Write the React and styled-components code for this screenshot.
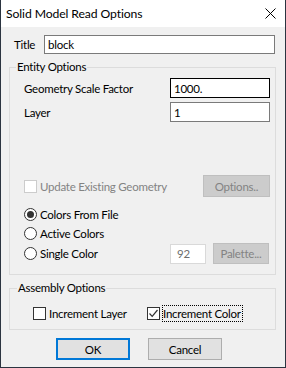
import React from 'react';
import styled, { createGlobalStyle } from 'styled-components';

const FONT = 'Lato, "Noto Sans", Arial, sans-serif';

const GlobalStyle = createGlobalStyle`
  html, body {
    margin: 0;
    padding: 0;
    background: #ffffff;
  }
  body {
    font-family: ${FONT};
    font-size: 11.5px;
    letter-spacing: -0.25px;
    color: #000000;
  }
`;

const Window = styled.div`
  box-sizing: border-box;
  width: 286px;
  height: 368px;
  border: 1px solid #2b3440;
  border-top: none;
  display: flex;
  flex-direction: column;
  background: #f0f0f0;
`;

const TitleBar = styled.div`
  height: 27px;
  flex: none;
  background: #ffffff;
  display: flex;
  align-items: center;
  padding: 0 9px 0 5px;
  font-size: 12.2px;
  letter-spacing: -0.1px;
`;

const TitleText = styled.div`
  flex: 1;
`;

const Body = styled.div`
  flex: 1;
  display: flex;
  flex-direction: column;
  padding: 8px 9px 0 8px;
`;

const TitleRow = styled.div`
  display: flex;
  align-items: center;
  height: 19px;
  padding: 0 1px 0 5px;
`;

const Label = styled.span`
  color: ${(p) => (p.disabled ? '#838383' : '#000000')};
  white-space: nowrap;
`;

const TextInput = styled.div`
  box-sizing: border-box;
  width: ${(p) => p.w}px;
  height: ${(p) => p.h || 20}px;
  margin-left: ${(p) => (p.push ? 'auto' : '0')};
  background: #ffffff;
  border: 1px solid ${(p) => (p.focused ? '#000000' : p.disabled ? '#d9d9d9' : '#7a7a7a')};
  color: ${(p) => (p.disabled ? '#6d6d6d' : '#000000')};
  display: flex;
  align-items: center;
  padding-left: ${(p) => (p.disabled ? 6 : 3)}px;
`;

const Group = styled.fieldset`
  margin: ${(p) => p.top || 0}px 0 0 0;
  padding: 0;
  min-width: 0;
  border: 1px solid #dcdcdc;
`;

const Legend = styled.legend`
  margin-left: ${(p) => p.offset}px;
  padding: 0 1px;
  line-height: 16px;
`;

const GroupContent = styled.div`
  display: flex;
  flex-direction: column;
  padding: ${(p) => p.pad};
`;

const Row = styled.div`
  display: flex;
  align-items: center;
  height: ${(p) => p.h}px;
  margin-top: ${(p) => p.mt || 0}px;
`;

const Choice = styled.label`
  display: flex;
  align-items: center;
  gap: 3px;
`;

const BoxMark = styled.span`
  box-sizing: border-box;
  width: 13px;
  height: 13px;
  flex: none;
  background: #ffffff;
  border: 1px solid ${(p) => (p.disabled ? '#cccccc' : '#333333')};
  display: flex;
  align-items: center;
  justify-content: center;
`;

const RadioMark = styled.span`
  box-sizing: border-box;
  width: 13px;
  height: 13px;
  flex: none;
  border-radius: 50%;
  background: #ffffff;
  border: 1px solid #333333;
  display: flex;
  align-items: center;
  justify-content: center;

  &::after {
    content: '';
    display: ${(p) => (p.checked ? 'block' : 'none')};
    width: 7px;
    height: 7px;
    border-radius: 50%;
    background: #333333;
  }
`;

const FocusText = styled.span`
  outline: 1px dotted #000000;
  outline-offset: 0;
  padding: 1px 1px 1px 0;
`;

const Button = styled.div`
  box-sizing: border-box;
  width: ${(p) => p.w}px;
  height: ${(p) => p.h || 22}px;
  margin-left: ${(p) => (p.push ? 'auto' : p.ml ? `${p.ml}px` : '0')};
  margin-right: ${(p) => p.mr || 0}px;
  display: flex;
  align-items: center;
  justify-content: center;
  background: ${(p) => (p.disabled ? '#cccccc' : '#e1e1e1')};
  border: 1px solid ${(p) => (p.primary ? '#0078d7' : p.disabled ? '#bfbfbf' : '#adadad')};
  box-shadow: ${(p) => (p.primary ? 'inset 0 0 0 1px #0078d7' : 'none')};
  color: ${(p) => (p.disabled ? '#838383' : '#000000')};
`;

const AssemblyRow = styled.div`
  display: grid;
  grid-template-columns: 114px auto;
  align-items: center;
  height: 21px;
`;

const ButtonBar = styled.div`
  display: flex;
  gap: 18px;
  margin-top: 8px;
  padding-left: 47px;
`;

function CloseIcon() {
  return (
    <svg width="11" height="11" viewBox="0 0 11 11">
      <path d="M0.5 0.5 L10.5 10.5 M10.5 0.5 L0.5 10.5" stroke="#000" strokeWidth="1" />
    </svg>
  );
}

function Check() {
  return (
    <svg width="11" height="11" viewBox="0 0 11 11">
      <path d="M1.5 5.5 L4.2 8.3 L9.5 2" fill="none" stroke="#333" strokeWidth="1.2" />
    </svg>
  );
}

export default function App() {
  return (
    <>
      <GlobalStyle />
      <Window>
        <TitleBar>
          <TitleText>Solid Model Read Options</TitleText>
          <CloseIcon />
        </TitleBar>
        <Body>
          <TitleRow>
            <Label>Title</Label>
            <TextInput w={231} h={19} push>block</TextInput>
          </TitleRow>

          <Group top={5}>
            <Legend offset={6}>Entity Options</Legend>
            <GroupContent pad="3px 5px 10px 14px">
              <Row h={20}>
                <Label>Geometry Scale Factor</Label>
                <TextInput w={100} push focused>1000.</TextInput>
              </Row>
              <Row h={20} mt={4}>
                <Label>Layer</Label>
                <TextInput w={100} push>1</TextInput>
              </Row>
              <Row h={22} mt={53}>
                <Choice>
                  <BoxMark disabled />
                  <Label disabled>Update Existing Geometry</Label>
                </Choice>
                <Button w={67} push disabled>Options..</Button>
              </Row>
              <Row h={19} mt={8}>
                <Choice>
                  <RadioMark checked />
                  <Label>Colors From File</Label>
                </Choice>
              </Row>
              <Row h={19}>
                <Choice>
                  <RadioMark />
                  <Label>Active Colors</Label>
                </Choice>
              </Row>
              <Row h={21}>
                <Choice>
                  <RadioMark />
                  <Label>Single Color</Label>
                </Choice>
                <TextInput w={36} push disabled>92</TextInput>
                <Button w={56} h={21} ml={7} mr={1} disabled>Palette...</Button>
              </Row>
            </GroupContent>
          </Group>

          <Group top={5}>
            <Legend offset={7}>Assembly Options</Legend>
            <GroupContent pad="7px 5px 5px 23px">
              <AssemblyRow>
                <Choice>
                  <BoxMark />
                  <Label>Increment Layer</Label>
                </Choice>
                <Choice>
                  <BoxMark>
                    <Check />
                  </BoxMark>
                  <FocusText>Increment Color</FocusText>
                </Choice>
              </AssemblyRow>
            </GroupContent>
          </Group>

          <ButtonBar>
            <Button w={74} primary>OK</Button>
            <Button w={74}>Cancel</Button>
          </ButtonBar>
        </Body>
      </Window>
    </>
  );
}
